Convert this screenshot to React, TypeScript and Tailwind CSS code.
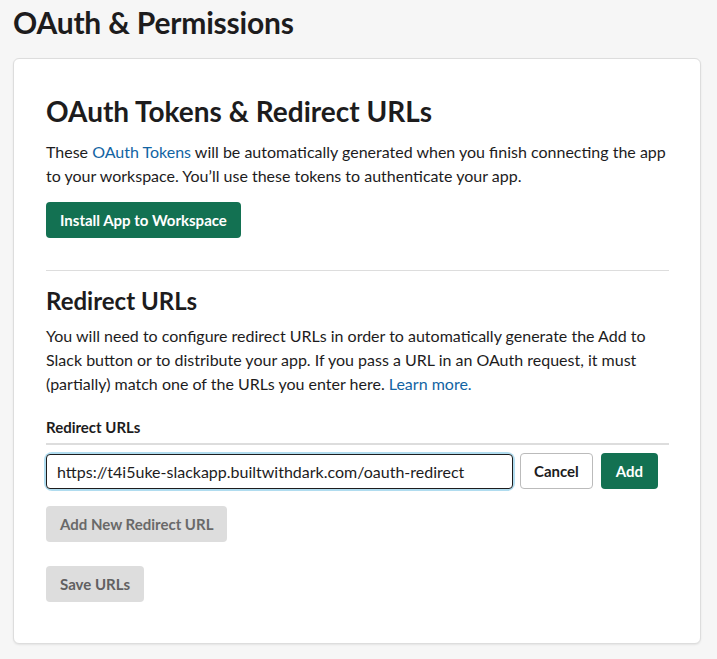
import React from 'react';

const font = { fontFamily: 'Lato, "Liberation Sans", sans-serif' };

export default function App() {
  const [url, setUrl] = React.useState('https://t4i5uke-slackapp.builtwithdark.com/oauth-redirect');

  return (
    <div style={font} className="min-h-[659px] w-[717px] bg-[#f6f6f6] text-[#1d1c1d]">
      <div className="pl-[13px] pt-[2px]">
        <h1 className="text-[30px] font-bold leading-[40px] tracking-[-0.2px]">OAuth &amp; Permissions</h1>
      </div>

      <div className="ml-[13px] mr-[16px] mt-[16px] rounded-[6px] border border-[#dddddd] bg-white px-[32px] pb-[41px] pt-[32px] shadow-[0_1px_2px_rgba(0,0,0,0.08)]">
        <h2 className="text-[28px] font-bold leading-[40px]">OAuth Tokens &amp; Redirect URLs</h2>
        <p className="mt-[9px] text-[16px] leading-[24px] text-[#1d1c1d]">
          These <a className="text-[#1264a3]">OAuth Tokens</a> will be automatically generated when you finish connecting the app
          to your workspace. You’ll use these tokens to authenticate your app.
        </p>
        <button className="mt-[14px] h-[36px] rounded-[4px] bg-[#137152] px-[14px] text-[15px] font-bold text-white">
          Install App to Workspace
        </button>

        <div className="mt-[32px] h-px w-[623px] bg-[#dddddd]" />

        <h3 className="mt-[14px] text-[24px] font-bold leading-[32px]">Redirect URLs</h3>
        <p className="mt-[7px] w-[630px] text-[16px] leading-[24px]">
          You will need to configure redirect URLs in order to automatically generate the Add to Slack button or to
          distribute your app. If you pass a URL in an OAuth request, it must (partially) match one of the URLs you enter
          here. <a className="text-[#1264a3]">Learn more.</a>
        </p>

        <div className="mt-[20px] w-[623px] border-b-2 border-[#dddddd] pb-[5px] text-[15px] font-bold leading-[22px]">
          Redirect URLs
        </div>

        <div className="mt-[8px] flex items-center gap-[8px]">
          <div className="rounded-[6px] shadow-[0_0_0_2px_rgba(29,155,209,0.35)]">
            <input
              value={url}
              onChange={(e) => setUrl(e.target.value)}
              className="h-[35px] w-[467px] rounded-[4px] border border-[#1d1c1d] bg-white px-[10px] text-[16px] text-[#1d1c1d] outline-none"
              style={font}
            />
          </div>
          <button className="ml-[-1px] h-[36px] rounded-[4px] border border-[#bbbbbb] bg-white px-[13px] text-[15px] font-bold text-[#1d1c1d]">
            Cancel
          </button>
          <button className="h-[36px] rounded-[4px] bg-[#137152] px-[15px] text-[15px] font-bold text-white">Add</button>
        </div>

        <button className="mt-[17px] h-[36px] rounded-[4px] bg-[#dddddd] px-[14px] text-[15px] font-bold text-[#696969]">
          Add New Redirect URL
        </button>
        <div>
          <button className="mt-[24px] h-[36px] rounded-[4px] bg-[#dddddd] px-[14px] text-[15px] font-bold text-[#616061]">
            Save URLs
          </button>
        </div>
      </div>
    </div>
  );
}
